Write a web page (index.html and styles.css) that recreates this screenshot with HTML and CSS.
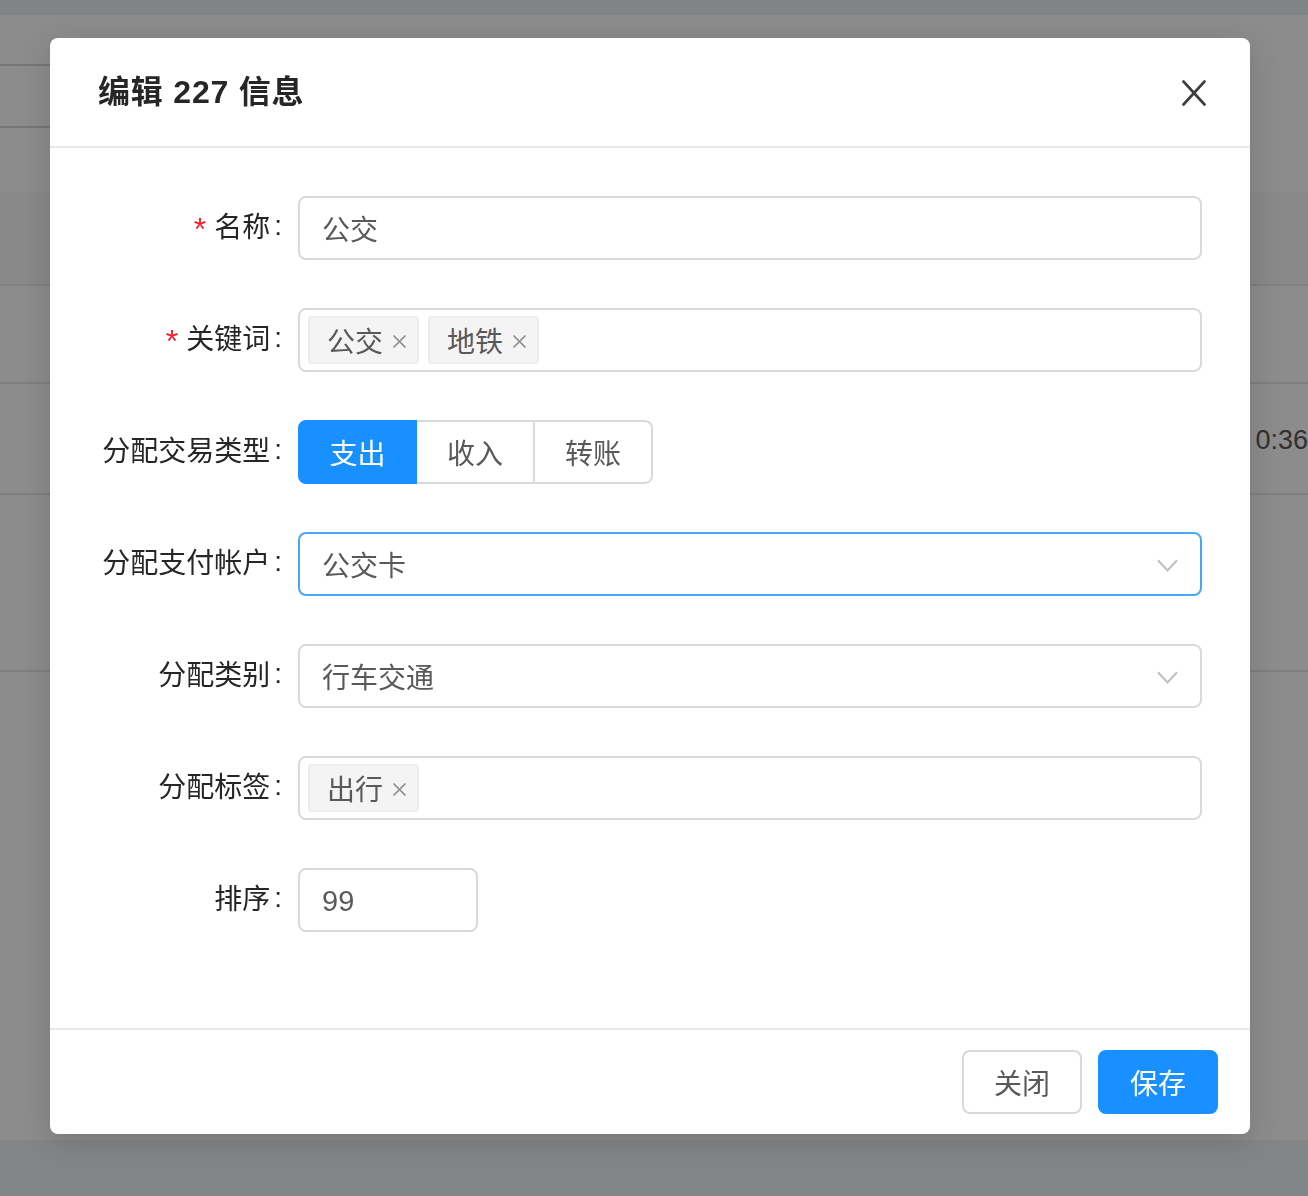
FILE: index.html
```html
<!DOCTYPE html>
<html lang="zh-CN">
<head>
<meta charset="utf-8">
<title>编辑 227 信息</title>
<link rel="stylesheet" href="styles.css">
</head>
<body>
<div class="page">
  <div class="page-top"></div>
  <div class="page-card">
    <div class="search-row">
      <div class="search-box"></div>
    </div>
    <div class="table">
      <div class="table-head"></div>
      <div class="table-row row-a"></div>
      <div class="table-row row-b"><span class="cell-time">0:36</span></div>
      <div class="table-row row-c"></div>
    </div>
  </div>
</div>
<div class="mask"></div>

<div class="modal" role="dialog">
  <div class="modal-header">
    <div class="modal-title">编辑 227 信息</div>
    <button class="modal-close" type="button" aria-label="Close">
      <svg width="24" height="26" viewBox="0 0 24 26"><path d="M1.5 1.5 L22.5 24.5 M22.5 1.5 L1.5 24.5" stroke="#3d3d3d" stroke-width="2.6" fill="none" stroke-linecap="round"/></svg>
    </button>
  </div>

  <div class="modal-body">
    <div class="form-row">
      <div class="form-label required">名称</div>
      <div class="form-control">
        <div class="input">公交</div>
      </div>
    </div>

    <div class="form-row">
      <div class="form-label required">关键词</div>
      <div class="form-control">
        <div class="select select-multi">
          <span class="tag">公交<svg class="tag-x" width="15" height="15" viewBox="0 0 15 15"><path d="M1.5 1.5 L13.5 13.5 M13.5 1.5 L1.5 13.5" stroke="#8c8c8c" stroke-width="1.7" fill="none"/></svg></span>
          <span class="tag">地铁<svg class="tag-x" width="15" height="15" viewBox="0 0 15 15"><path d="M1.5 1.5 L13.5 13.5 M13.5 1.5 L1.5 13.5" stroke="#8c8c8c" stroke-width="1.7" fill="none"/></svg></span>
        </div>
      </div>
    </div>

    <div class="form-row">
      <div class="form-label">分配交易类型</div>
      <div class="form-control">
        <div class="radio-group">
          <span class="radio-btn checked">支出</span>
          <span class="radio-btn">收入</span>
          <span class="radio-btn">转账</span>
        </div>
      </div>
    </div>

    <div class="form-row">
      <div class="form-label">分配支付帐户</div>
      <div class="form-control">
        <div class="select select-single focused">
          <span class="select-value">公交卡</span>
          <svg class="arrow" width="21" height="13" viewBox="0 0 21 13"><path d="M1 1.2 L10.5 11.5 L20 1.2" stroke="#bfbfbf" stroke-width="2" fill="none" stroke-linejoin="miter"/></svg>
        </div>
      </div>
    </div>

    <div class="form-row">
      <div class="form-label">分配类别</div>
      <div class="form-control">
        <div class="select select-single">
          <span class="select-value">行车交通</span>
          <svg class="arrow" width="21" height="13" viewBox="0 0 21 13"><path d="M1 1.2 L10.5 11.5 L20 1.2" stroke="#bfbfbf" stroke-width="2" fill="none" stroke-linejoin="miter"/></svg>
        </div>
      </div>
    </div>

    <div class="form-row">
      <div class="form-label">分配标签</div>
      <div class="form-control">
        <div class="select select-multi">
          <span class="tag">出行<svg class="tag-x" width="15" height="15" viewBox="0 0 15 15"><path d="M1.5 1.5 L13.5 13.5 M13.5 1.5 L1.5 13.5" stroke="#8c8c8c" stroke-width="1.7" fill="none"/></svg></span>
        </div>
      </div>
    </div>

    <div class="form-row">
      <div class="form-label">排序</div>
      <div class="form-control">
        <div class="input input-small num">99</div>
      </div>
    </div>
  </div>

  <div class="modal-footer">
    <button class="btn" type="button">关闭</button>
    <button class="btn btn-primary" type="button">保存</button>
  </div>
</div>
</body>
</html>
```

FILE: styles.css
```css
* {
  box-sizing: border-box;
  margin: 0;
  padding: 0;
}

html, body {
  width: 1308px;
  height: 1196px;
  overflow: hidden;
}

body {
  background: #f0f2f5;
  font-family: "Liberation Sans", "Noto Sans CJK SC", sans-serif;
  color: #262626;
  position: relative;
}

/* ---------- page under the mask ---------- */
.page {
  display: flex;
  flex-direction: column;
  height: 1196px;
}

.page-top {
  height: 15px;
  background: #eceef1;
}

.page-card {
  background: #fff;
  height: 1125px;
  display: flex;
  flex-direction: column;
}

.search-row {
  padding-top: 49px;
  height: 177px;
}

.search-box {
  width: 300px;
  height: 64px;
  margin-left: -40px;
  border: 2px solid #d9d9d9;
  border-radius: 8px;
}

.table-head {
  height: 94px;
  background: #fafafa;
  border-bottom: 2px solid #e8e8e8;
}

.table-row {
  border-bottom: 2px solid #e8e8e8;
  display: flex;
  align-items: center;
  justify-content: flex-end;
}

.row-a { height: 98px; }
.row-b { height: 111px; padding-top: 3px; }
.row-c { height: 177px; }

.cell-time {
  font-size: 27px;
  color: #595959;
  white-space: nowrap;
  margin-right: 0;
}

.mask {
  position: fixed;
  inset: 0;
  background: rgba(0, 0, 0, 0.45);
}

/* ---------- modal ---------- */
.modal {
  position: absolute;
  left: 50px;
  top: 38px;
  width: 1200px;
  background: #fff;
  border-radius: 8px;
  box-shadow: 0 8px 32px rgba(0, 0, 0, 0.15);
}

.modal-header {
  height: 110px;
  padding: 0 48px;
  display: flex;
  align-items: center;
  border-bottom: 2px solid #e8e8e8;
  position: relative;
}

.modal-title {
  font-size: 32px;
  font-weight: 700;
  color: #262626;
  line-height: 44px;
  letter-spacing: 0.8px;
}

.modal-close {
  position: absolute;
  top: 0;
  right: 0;
  width: 112px;
  height: 110px;
  border: 0;
  background: transparent;
  display: flex;
  align-items: center;
  justify-content: center;
}

.modal-body {
  padding: 48px 48px 0;
}

.form-row {
  display: flex;
  align-items: center;
  height: 64px;
  margin-bottom: 48px;
}

.form-row:last-child {
  margin-bottom: 96px;
}

.form-label {
  width: 200px;
  flex: none;
  text-align: right;
  font-size: 28px;
  color: #262626;
  white-space: nowrap;
  line-height: 40px;
}

.form-label::after {
  content: ":";
  margin: 0 16px 0 4px;
  position: relative;
  top: -2px;
}

.form-label.required::before {
  content: "*";
  display: inline-block;
  margin-right: 8px;
  color: #f5222d;
  font-size: 32px;
  line-height: 1;
  position: relative;
  top: 3px;
}

.form-control {
  flex: 1;
  display: flex;
}

.input,
.select {
  height: 64px;
  border: 2px solid #d9d9d9;
  border-radius: 8px;
  font-size: 28px;
  color: #595959;
  display: flex;
  align-items: center;
  background: #fff;
}

.input {
  flex: 1;
  padding: 0 22px;
}

.input-small {
  flex: none;
  width: 180px;
}

.num {
  font-family: "Liberation Sans", sans-serif;
  font-size: 29px;
  padding-top: 2px;
}

.select {
  flex: 1;
}

.select-multi {
  padding: 0 8px;
  gap: 9px;
}

.tag {
  height: 48px;
  display: inline-flex;
  align-items: center;
  padding: 0 10px 0 17px;
  background: #f4f4f4;
  border: 2px solid #ececec;
  border-radius: 4px;
  font-size: 28px;
  color: #595959;
}

.tag-x {
  margin-left: 9px;
  margin-top: 3px;
}

.select-single {
  padding: 0 22px 0 22px;
  justify-content: space-between;
}

.select-single.focused {
  border-color: #4aa8f8;
}

.arrow {
  display: block;
  margin-top: 2px;
}

/* radio button group */
.radio-group {
  display: flex;
}

.radio-btn {
  width: 118px;
  height: 64px;
  display: flex;
  align-items: center;
  justify-content: center;
  font-size: 28px;
  color: #595959;
  border: 2px solid #d9d9d9;
  border-left: 0;
  background: #fff;
}

.radio-btn:first-child {
  width: 119px;
  border-left: 2px solid #d9d9d9;
  border-radius: 8px 0 0 8px;
}

.radio-btn:last-child {
  border-radius: 0 8px 8px 0;
}

.radio-btn.checked {
  background: #1890ff;
  border-color: #1890ff;
  color: #fff;
}

/* footer */
.modal-footer {
  border-top: 2px solid #e8e8e8;
  padding: 20px 32px 20px;
  display: flex;
  justify-content: flex-end;
  gap: 16px;
}

.btn {
  height: 64px;
  width: 120px;
  border: 2px solid #d9d9d9;
  border-radius: 8px;
  background: #fff;
  font-family: "Liberation Sans", "Noto Sans CJK SC", sans-serif;
  font-size: 28px;
  color: #595959;
  display: flex;
  align-items: center;
  justify-content: center;
}

.btn-primary {
  background: #1890ff;
  border-color: #1890ff;
  color: #fff;
}
```
